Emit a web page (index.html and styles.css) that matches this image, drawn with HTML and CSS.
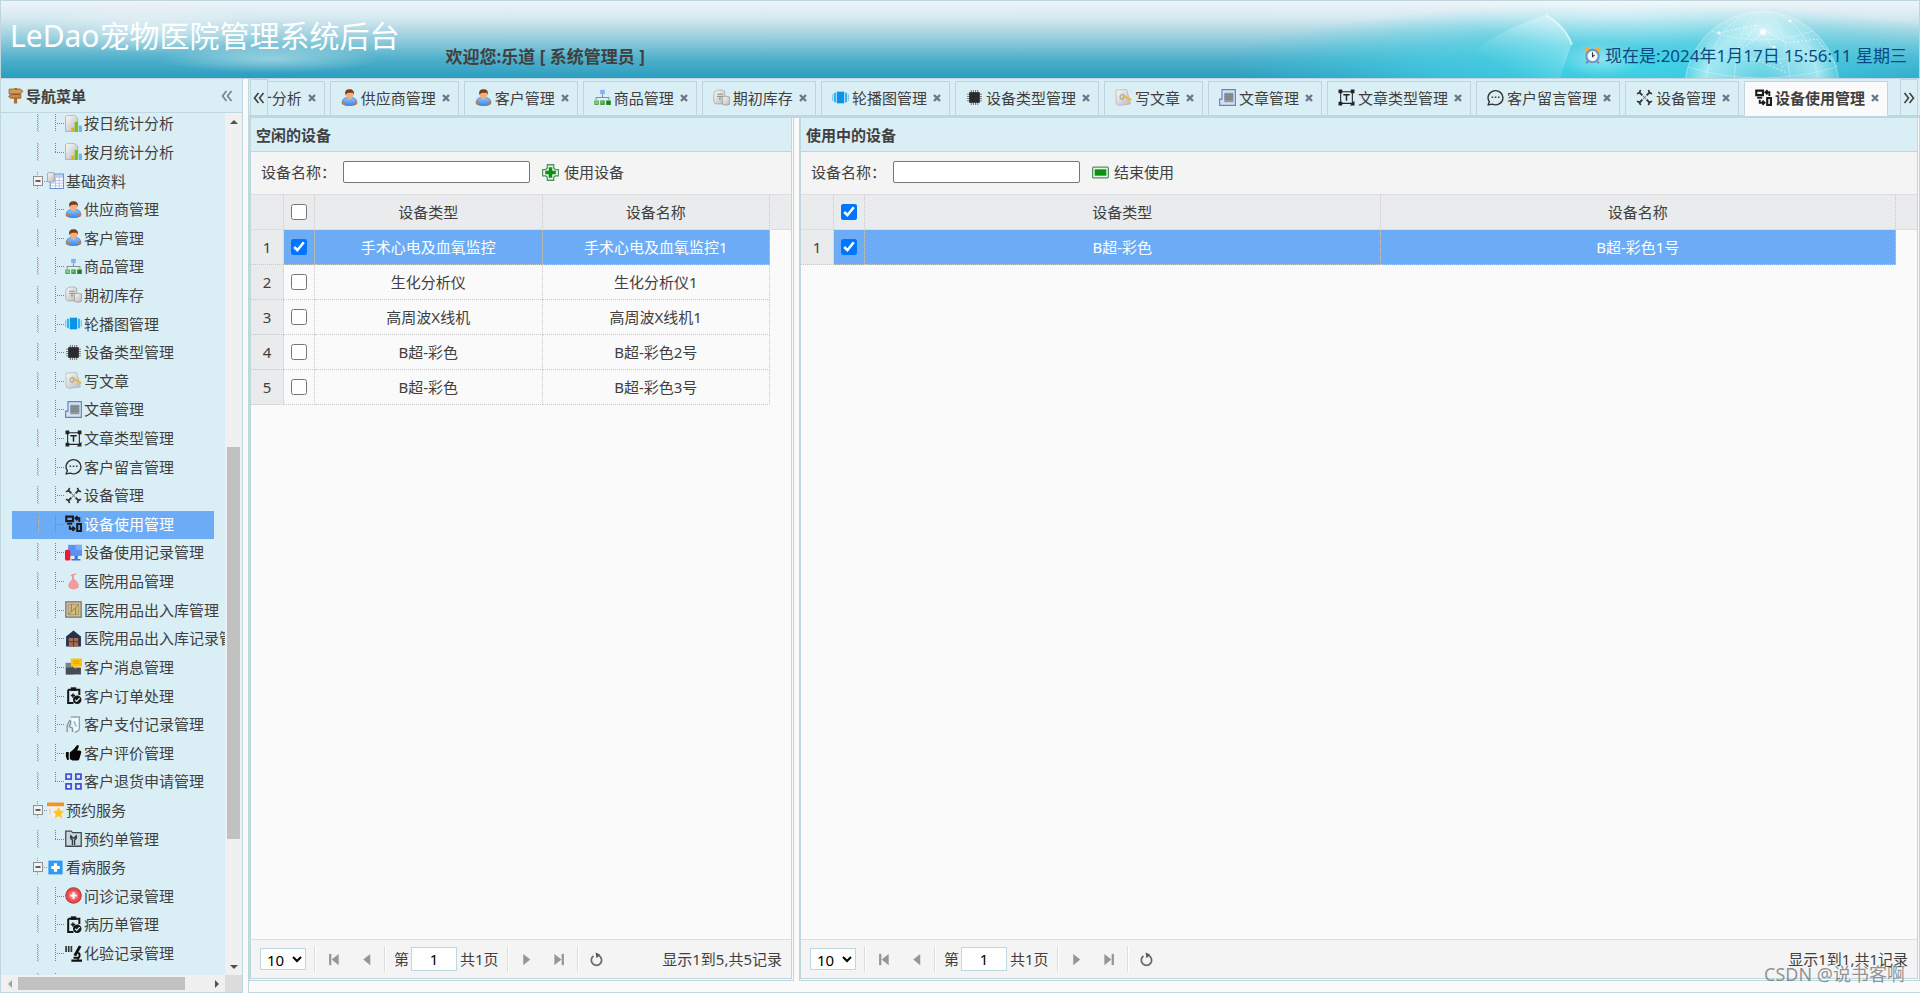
FILE: index.html
```html
<!DOCTYPE html>
<html lang="zh-CN">
<head>
<meta charset="utf-8">
<title>LeDao宠物医院管理系统后台</title>
<link rel="stylesheet" href="styles.css">
</head>
<body>
<svg class="defs" aria-hidden="true">
  <defs>
    <linearGradient id="g-blue" x1="0" y1="0" x2="0" y2="1"><stop offset="0" stop-color="#8cc4ff"/><stop offset="1" stop-color="#3c86e8"/></linearGradient>
    <linearGradient id="g-paper" x1="0" y1="0" x2="1" y2="1"><stop offset="0" stop-color="#fafafa"/><stop offset="1" stop-color="#b9b9b9"/></linearGradient>
    <radialGradient id="g-globe"><stop offset="0" stop-color="#fff" stop-opacity=".1"/><stop offset=".75" stop-color="#e4fcfe" stop-opacity=".6"/><stop offset="1" stop-color="#eaffff" stop-opacity=".15"/></radialGradient>
    <radialGradient id="g-haze"><stop offset="0" stop-color="#3ed6e8" stop-opacity=".95"/><stop offset=".5" stop-color="#45d4e8" stop-opacity=".6"/><stop offset="1" stop-color="#2fd0e4" stop-opacity="0"/></radialGradient>
    <radialGradient id="g-mist"><stop offset="0" stop-color="#fff" stop-opacity=".4"/><stop offset="1" stop-color="#fff" stop-opacity="0"/></radialGradient>
    <linearGradient id="g-box" x1="1" y1="0" x2="0" y2="1"><stop offset="0" stop-color="#e6fbfe" stop-opacity=".6"/><stop offset=".7" stop-color="#c8f6fb" stop-opacity="0"/></linearGradient>
  </defs>
  <symbol id="t-line" viewBox="0 0 17 18"><path d="M7.5 0v18" stroke="#8d9599" stroke-dasharray="1 1"/><path d="M8.500 1v17" stroke="#b4bdc1" stroke-dasharray="1 1"/></symbol>
  <symbol id="t-join" viewBox="0 0 18 18"><path d="M8.500 0v18M10 9.500h8" stroke="#7b8387" stroke-dasharray="1 1"/></symbol>
  <symbol id="t-last" viewBox="0 0 18 18"><path d="M8.500 0v9M8 9.500h10" stroke="#7b8387" stroke-dasharray="1 1"/></symbol>
  <symbol id="t-minus" viewBox="0 0 17 18"><path d="M7.500 0v18M14 9.500h3" stroke="#8d9599" stroke-dasharray="1 1"/><rect x="3.500" y="4.500" width="9" height="9" fill="#f2f2f2" stroke="#909090"/><path d="M5.500 9h5" stroke="#222" stroke-width="1.400"/></symbol>
  <symbol id="i-sign" viewBox="0 0 16 16"><path d="M7 1h2.500v14.500H6.500z" fill="#a87038"/><path d="M2 2h10.500l2.500 2-2.500 2.500H2z" fill="#d59a55" stroke="#8a5626" stroke-width=".8"/><path d="M3.500 7h9.500v3.500H3.500L1.500 9z" fill="#c98946" stroke="#8a5626" stroke-width=".8"/></symbol>
  <symbol id="i-clock" viewBox="0 0 16 16"><circle cx="3.500" cy="3.200" r="2.800" fill="#f5ae2d"/><circle cx="12.500" cy="3.200" r="2.800" fill="#f5ae2d"/><path d="M4 13l-2 2.500M12 13l2 2.500" stroke="#7893b5" stroke-width="2"/><circle cx="8" cy="8.500" r="5.800" fill="#f6f9fc" stroke="#7095c4" stroke-width="2"/><path d="M8 5v4l2-1.500" fill="none" stroke="#333"/></symbol>
  <symbol id="i-report" viewBox="0 0 16 16"><path d="M.5 1.500l2-1.200H9L12 3v12.500H.5z" fill="url(#g-paper)" stroke="#a5a5a5" stroke-width=".7"/><path d="M6 12h2.700v4H6z" fill="#f7a51c"/><path d="M9.200 6.500H12V16H9.200z" fill="#6fc21c"/><path d="M13 10h3v6h-3z" fill="#6db6f2"/></symbol>
  <symbol id="i-base" viewBox="0 0 16 16"><path d="M3 2h12.500v13.500H3z" fill="#fff" stroke="#6b8fd6"/><path d="M3.500 2.500h11.500v3H3.500z" fill="#b9d0f5"/><path d="M4 8h11M4 10.500h11M4 13h11M8 5v10M11.500 5v10" stroke="#a9c0ea" stroke-width=".8"/><path d="M.5 1q3-1.200 6.500 0v8q-3.500 1.200-6.500 0z" fill="url(#g-paper)" stroke="#999" stroke-width=".7"/></symbol>
  <symbol id="i-user" viewBox="0 0 16 16"><path d="M1 13q.3-4.500 4.500-5h5q4.200.5 4.500 5-1 2.700-7 2.700T1 13z" fill="url(#g-blue)" stroke="#2f6fc9" stroke-width=".6"/><circle cx="2.400" cy="13.300" r="1.500" fill="#c87a3c"/><circle cx="13.600" cy="13.300" r="1.500" fill="#c87a3c"/><ellipse cx="8" cy="4.800" rx="3.800" ry="4.300" fill="#efb07e"/><path d="M4 5.500Q3 .3 8 .3t4 5.200l-1-2H6.500z" fill="#7c3d14"/><path d="M6.500 9L8 10.500 9.500 9z" fill="#efb07e"/></symbol>
  <symbol id="i-org" viewBox="0 0 16 16"><path d="M8 5v3M2 10V8h12v2" fill="none" stroke="#8a8f99"/><path d="M5.800.8h4.400v4H5.800z" fill="#82b4f4"/><path d="M.3 10.800h4.200v4.200H.3z" fill="#48a83f"/><path d="M1.200 11.600h2.400v2.400H1.200z" fill="#90d488"/><path d="M5.900 10.800h4.200v4.200H5.900z" fill="#379a31"/><path d="M6.700 11.600h2v2h-2z" fill="#7ac872"/><path d="M11.500 10.800h4.300v4.200h-4.300z" fill="#16841a"/></symbol>
  <symbol id="i-store" viewBox="0 0 16 16"><path d="M1 3q5-4 10-1v12H2Q0 12 .5 8z" fill="url(#g-paper)" stroke="#a7a7a7" stroke-width=".7"/><path d="M4 5h5M4 7h5" stroke="#8f8f8f"/><circle cx="6.500" cy="9" r=".8" fill="#46a83c"/><path d="M9 7.500q3-1.500 6.500 0v7q-3 1.500-6.500 0z" fill="url(#g-paper)" stroke="#999" stroke-width=".7"/></symbol>
  <symbol id="i-slide" viewBox="0 0 16 16"><path d="M4.500 2.500h7v11h-7z" fill="#0b93e6"/><path d="M1.800 3.500h2v9h-2zM12.200 3.500h2v9h-2z" fill="#37b2f5"/><path d="M0 5h1.200v6H0zM14.800 5H16v6h-1.200z" fill="#7acdf9"/></symbol>
  <symbol id="i-chip" viewBox="0 0 16 16"><path d="M1 5h14M1 7h14M1 9h14M1 11h14M5 1v14M7 1v14M9 1v14M11 1v14" stroke="#7d7d7d"/><path d="M3 3h10v10H3z" fill="#2a2b2d"/></symbol>
  <symbol id="i-write" viewBox="0 0 16 16"><path d="M1 1l10-.5L14.500 14 4 15.500 1 14z" fill="url(#g-paper)" stroke="#b5b5b5" stroke-width=".7"/><path d="M5 6q2-2 4 0l-2 4q-3-1-2-4" fill="none" stroke="#8b8b8b" stroke-width=".8"/><path d="M7 6l8.500 4.500" stroke="#edb640" stroke-width="1.800"/></symbol>
  <symbol id="i-article" viewBox="0 0 16 16"><path d="M2.800.6h12.600v14.800H.6V9.500h2.200z" fill="#d5e2f2" stroke="#6681c8" stroke-width="1.100"/><path d="M5 3.500h8.500v9H5z" fill="#8f979f"/><path d="M5 5.500h8.500M5 7.500h8.500M5 9.500h8.500" stroke="#6e767d" stroke-width=".8"/></symbol>
  <symbol id="i-type" viewBox="0 0 16 16"><path d="M2.500 2.500h11v11h-11z" fill="none" stroke="#222"/><path d="M.5.5H4V4H.5zM12 .5h3.500V4H12zM.5 12H4v3.500H.5zM15.500 11v4.500H11z" fill="#222"/><path d="M5 5.500h6M8 5.500V11" stroke="#222" stroke-width="1.400"/></symbol>
  <symbol id="i-msg" viewBox="0 0 16 16"><path d="M2.200 12A7 6.700 0 1 1 5 14.300L1 15z" fill="none" stroke="#333" stroke-width="1.300" stroke-linejoin="round"/><path d="M4.300 7.800h1.500M7.300 7.800h1.500M10.300 7.800h1.500" stroke="#444" stroke-width="1.400"/></symbol>
  <symbol id="i-tools" viewBox="0 0 16 16"><path d="M3 3l3 3M13 3l-3 3M3 13l3-3M13 13l-3-3" stroke="#333" stroke-width="1.800"/><path d="M.8 4.200q2.500.5 3.500-3.400M15.200 4.200q-2.500.5-3.500-3.400M.8 11.800q2.500-.5 3.500 3.400M15.200 11.800q-2.500-.5-3.500 3.400" fill="none" stroke="#333" stroke-width="1.500"/><path d="M6.500 6.500l3 3M9.500 6.500l-3 3" stroke="#8b8b8b"/></symbol>
  <symbol id="i-use" viewBox="0 0 16 16"><path d="M1.200 1.500h6.300v4.300h-6.300z" fill="none" stroke="#1b1b1b" stroke-width="2"/><path d="M2 8.200h4.800" stroke="#1b1b1b" stroke-width="1.800"/><path d="M11.500 8.500h3.500v6.500h-3.500z" fill="none" stroke="#1b1b1b" stroke-width="2"/><path d="M10 3h3.500v3.500M11.800 1L9.800 3l2 2M4.500 10v3h4M7 11l2 2-2 2" fill="none" stroke="#1b1b1b" stroke-width="1.800"/></symbol>
  <symbol id="i-pc" viewBox="0 0 16 16"><path d="M3 .8h13v10.400H3z" fill="#5b90f4"/><path d="M10 .8h6v5h-6z" fill="#7fabf8"/><path d="M9 11h3v3h2.500v1.500H6V14h3z" fill="#3d6fe0"/><rect x="0" y="5.500" width="5" height="10" rx="1.500" fill="#f01830"/></symbol>
  <symbol id="i-drop" viewBox="0 0 16 16"><path d="M7.500 1v6" stroke="#f08a8a" stroke-width="1.600"/><path d="M5.500 2.500L10.500.8" stroke="#ec9a9a" stroke-width="1.300"/><path d="M8 5q5 4 5 7t-5 3.500q-5-.5-5-3.500t5-7z" fill="#f19c9c"/></symbol>
  <symbol id="i-crate" viewBox="0 0 16 16"><path d="M.8.800h14.400v14.400H.8z" fill="#dfcb94" stroke="#6f7378" stroke-width="1.200"/><path d="M3 3h10v10H3z" fill="#d4bc7e" stroke="#9b8a60" stroke-width=".8"/><path d="M3 13L13 3M6 3v7M10 6v7" stroke="#8d7c56" stroke-width=".9"/></symbol>
  <symbol id="i-house" viewBox="0 0 16 16"><path d="M1 6l7-5.500L15 6v9.500H1z" fill="#28304f"/><path d="M3.500 7.500h9v8h-9z" fill="#a76a4c"/><path d="M3.500 11h9M8 7.500v8" stroke="#5c3a34"/></symbol>
  <symbol id="i-news" viewBox="0 0 16 16"><path d="M.5 4.500H8v11H.5z" fill="#7a828a"/><path d="M1 9h14v6.500H1z" fill="#454c54"/><path d="M5.500.5H16v7.500h-4.500l-2 2.500V8h-4z" fill="#fdc30a"/><path d="M8 3h5.500M8 5h5.500" stroke="#e79800"/></symbol>
  <symbol id="i-order" viewBox="0 0 16 16"><path d="M3 2.500h10.500v5M8 15H3V2.500" fill="none" stroke="#151515" stroke-width="1.900"/><path d="M5.500.3h5v3.400h-5z" fill="#151515"/><path d="M5.500 8h4M7.500 6v4" stroke="#151515" stroke-width="1.400"/><circle cx="11.500" cy="12" r="4" fill="#151515"/><path d="M9.500 12l1.500 1.500 2.800-3" fill="none" stroke="#daecf4" stroke-width="1.200"/></symbol>
  <symbol id="i-pay" viewBox="0 0 16 16"><path d="M5.500 1h8v11.500q-1 2.500-4.500 2.500" fill="#f5fafc" stroke="#9aa1a8" stroke-width="1.300"/><path d="M4.500 4L2 9v6M4.500 4q2 1-.5 6l3 1.500V15" fill="none" stroke="#878e96" stroke-width="1.200"/><path d="M8.500 5l2 5" stroke="#6cc4ee" stroke-width="1.500"/></symbol>
  <symbol id="i-like" viewBox="0 0 16 16"><path d="M1 7.500h2.500v7.500H2Q0 11 1 7.500zM4.500 8Q9 5 11 1.500q2-1.500 2 1L11.500 6H14q2 .5 1 3l-1.500 5q-.5 1.500-2 1.500H7L4.500 14z" fill="#050505"/></symbol>
  <symbol id="i-grid" viewBox="0 0 16 16"><path d="M1 1h4.800v4.800H1zM10.200 1H15v4.800h-4.800zM1 10.200h4.800V15H1zM10.200 10.200H15V15h-4.800z" fill="none" stroke="#4b4fd8" stroke-width="1.700"/></symbol>
  <symbol id="i-cal" viewBox="0 0 16 16"><path d="M.5 3h14v11.500H.5z" fill="#f2efe8"/><path d="M2 6h1.500v6H2z" fill="#c9d8f5"/><path d="M0 .5h16v3.500H0z" fill="#f5902a"/><path d="M11 5l1.700 3.300 3.300.5-2.500 2.500.7 3.700-3.200-1.700L7.500 15l.7-3.700L5.500 8.800l3.500-.5z" fill="#fdc628"/></symbol>
  <symbol id="i-folder" viewBox="0 0 16 16"><path d="M.7 1h5l1.500 1.500h8.100v12.800H.7z" fill="#c7d9df" stroke="#3e4a4e" stroke-width="1.200"/><path d="M7 14V9.500Q4.500 8 5.500 5.500L7.300 7.500h1.400L10.500 5.500Q11.500 8 9 9.500V14" fill="none" stroke="#333c40" stroke-width="1.300"/></symbol>
  <symbol id="i-cross" viewBox="0 0 16 16"><path d="M1.300 1.500h13.400v13H1.300z" fill="#2e9bf0"/><path d="M8 4v8M4 8h8" stroke="#fff" stroke-width="3"/></symbol>
  <symbol id="i-med" viewBox="0 0 16 16"><circle cx="8" cy="8" r="7.300" fill="#f2474b" stroke="#b53a40"/><circle cx="8" cy="8" r="4.300" fill="#f7777a"/><path d="M8 5v6M5 8h6" stroke="#fff" stroke-width="2"/></symbol>
  <symbol id="i-scope" viewBox="0 0 16 16"><path d="M1 1v5.500M3.500 1v5.500M6 1v5.500" stroke="#333" stroke-width="1.600"/><path d="M13 .5l2.500 1-5 9L8 9.500z" fill="#111"/><path d="M12.500 7q3 3-1 6.500M6 14.700h10M8 12h4" fill="none" stroke="#111" stroke-width="1.900"/></symbol>
  <symbol id="i-add" viewBox="0 0 16 16"><path d="M5 .7h6v3l1.500 1.500h3v6h-3L11 12.500v2.800H5v-2.800l-1.500-1.300h-3v-6h3L5 3.700z" fill="#edf6ed" stroke="#4f9460" stroke-width="1.200"/><path d="M6.300 3h3.400v3.300H13v3.400H9.700V13H6.300V9.700H3V6.300h3.300z" fill="#0c930c"/></symbol>
  <symbol id="i-remove" viewBox="0 0 16 16"><rect x=".6" y="3" width="14.800" height="10" rx="1" fill="#edf6ed" stroke="#4f9460" stroke-width="1.200"/><path d="M2.500 5h11v6h-11z" fill="#0c930c"/></symbol>
  <symbol id="i-close" viewBox="0 0 8 8"><path d="M1 1l6 6M7 1L1 7" stroke="#6c7889" stroke-width="2.400"/></symbol>
  <symbol id="i-left" viewBox="0 0 12 12"><path d="M5.500 1L1.500 6l4 5M10.500 1l-4 5 4 5" fill="none" stroke="currentColor" stroke-width="1.600"/></symbol>
  <symbol id="i-right" viewBox="0 0 12 12"><path d="M1.500 1l4 5-4 5M6.500 1l4 5-4 5" fill="none" stroke="currentColor" stroke-width="1.600"/></symbol>
  <symbol id="p-first" viewBox="0 0 16 16"><path d="M4.500 2v12" stroke="#969696" stroke-width="2.400"/><path d="M13.500 2v12L6 8z" fill="#969696"/></symbol>
  <symbol id="p-prev" viewBox="0 0 16 16"><path d="M12 2v12L4.500 8z" fill="#969696"/></symbol>
  <symbol id="p-next" viewBox="0 0 16 16"><path d="M4.500 2v12L12 8z" fill="#969696"/></symbol>
  <symbol id="p-last" viewBox="0 0 16 16"><path d="M11.500 2v12" stroke="#969696" stroke-width="2.400"/><path d="M2.500 2v12L10 8z" fill="#969696"/></symbol>
  <symbol id="p-load" viewBox="0 0 16 16"><path d="M4.800 4.200a5.500 5.500 0 1 0 6-.2" fill="none" stroke="#746b66" stroke-width="1.900"/><path d="M7 .5l5 2.500L8 6.700z" fill="#5b504a"/></symbol>
</svg>

<div class="app">
  <header class="banner">
    <svg class="banner-art" viewBox="0 0 720 77" aria-hidden="true">
      <ellipse cx="430" cy="66" rx="400" ry="64" fill="url(#g-haze)"/>
      <ellipse cx="420" cy="10" rx="160" ry="36" fill="url(#g-mist)"/>
      <path d="M260 60q40-32 87-46 20 12 26 28l-12 35H250z" fill="url(#g-box)"/>
      <path d="M347 14q20 12 26 30" fill="none" stroke="#fff" stroke-width="2" opacity=".55"/>
      <ellipse cx="402" cy="58" rx="44" ry="18" fill="url(#g-mist)"/>
      <circle cx="563" cy="88" r="78" fill="url(#g-globe)"/>
      <g fill="none" stroke="#f4ffff" stroke-width="1" opacity=".32">
        <circle cx="563" cy="88" r="77"/><ellipse cx="563" cy="88" rx="56" ry="78"/><ellipse cx="563" cy="88" rx="28" ry="78"/>
        <path d="M512 30q50 18 102 0M496 48q66 22 134 0M488 66q74 22 150 0"/>
      </g>
      <path d="M520 32l38-8 30 18 30-4 20 28M540 50l24-18 20 34M558 24l-20 26 50 22" fill="none" stroke="#fff" stroke-width=".8" stroke-dasharray="2 2" opacity=".8"/>
      <ellipse cx="564" cy="31" rx="24" ry="16" fill="url(#g-mist)"/>
      <g fill="#fff" opacity=".9"><circle cx="564" cy="31" r="3"/><circle cx="520" cy="32" r="1.500"/><circle cx="591" cy="20" r="1.500"/><circle cx="600" cy="50" r="1.500"/><circle cx="540" cy="50" r="1.500"/><circle cx="575" cy="46" r="1.500"/></g>
    </svg>
    <svg class="banner-mist" viewBox="0 0 400 77" preserveAspectRatio="none" aria-hidden="true">
      <ellipse cx="150" cy="28" rx="120" ry="24" fill="url(#g-mist)"/><ellipse cx="270" cy="58" rx="110" ry="14" fill="url(#g-mist)"/>
    </svg>
    <h1 class="brand">LeDao宠物医院管理系统后台</h1>
    <p class="welcome">欢迎您:乐道 [ 系统管理员 ]</p>
    <p class="now"><svg class="ico"><use href="#i-clock"/></svg><time>现在是:2024年1月17日 15:56:11 星期三</time></p>
  </header>

  <aside class="nav">
    <div class="nav-head"><svg class="ico"><use href="#i-sign"/></svg><h2>导航菜单</h2><button class="fold" aria-label="折叠"><svg><use href="#i-left"/></svg></button></div>
    <div class="nav-body">
      <div class="tree-view">
      <ul class="tree">
        <li class="kid"><a href="#"><svg class="ln"><use href="#t-line"/></svg><svg class="jn"><use href="#t-join"/></svg><svg class="ico"><use href="#i-report"/></svg>按日统计分析</a></li>
        <li class="kid"><a href="#"><svg class="ln"><use href="#t-line"/></svg><svg class="jn"><use href="#t-last"/></svg><svg class="ico"><use href="#i-report"/></svg>按月统计分析</a></li>
        <li><a href="#"><svg class="ln"><use href="#t-minus"/></svg><svg class="ico"><use href="#i-base"/></svg>基础资料</a></li>
        <li class="kid"><a href="#"><svg class="ln"><use href="#t-line"/></svg><svg class="jn"><use href="#t-join"/></svg><svg class="ico"><use href="#i-user"/></svg>供应商管理</a></li>
        <li class="kid"><a href="#"><svg class="ln"><use href="#t-line"/></svg><svg class="jn"><use href="#t-join"/></svg><svg class="ico"><use href="#i-user"/></svg>客户管理</a></li>
        <li class="kid"><a href="#"><svg class="ln"><use href="#t-line"/></svg><svg class="jn"><use href="#t-join"/></svg><svg class="ico"><use href="#i-org"/></svg>商品管理</a></li>
        <li class="kid"><a href="#"><svg class="ln"><use href="#t-line"/></svg><svg class="jn"><use href="#t-join"/></svg><svg class="ico"><use href="#i-store"/></svg>期初库存</a></li>
        <li class="kid"><a href="#"><svg class="ln"><use href="#t-line"/></svg><svg class="jn"><use href="#t-join"/></svg><svg class="ico"><use href="#i-slide"/></svg>轮播图管理</a></li>
        <li class="kid"><a href="#"><svg class="ln"><use href="#t-line"/></svg><svg class="jn"><use href="#t-join"/></svg><svg class="ico"><use href="#i-chip"/></svg>设备类型管理</a></li>
        <li class="kid"><a href="#"><svg class="ln"><use href="#t-line"/></svg><svg class="jn"><use href="#t-join"/></svg><svg class="ico"><use href="#i-write"/></svg>写文章</a></li>
        <li class="kid"><a href="#"><svg class="ln"><use href="#t-line"/></svg><svg class="jn"><use href="#t-join"/></svg><svg class="ico"><use href="#i-article"/></svg>文章管理</a></li>
        <li class="kid"><a href="#"><svg class="ln"><use href="#t-line"/></svg><svg class="jn"><use href="#t-join"/></svg><svg class="ico"><use href="#i-type"/></svg>文章类型管理</a></li>
        <li class="kid"><a href="#"><svg class="ln"><use href="#t-line"/></svg><svg class="jn"><use href="#t-join"/></svg><svg class="ico"><use href="#i-msg"/></svg>客户留言管理</a></li>
        <li class="kid"><a href="#"><svg class="ln"><use href="#t-line"/></svg><svg class="jn"><use href="#t-join"/></svg><svg class="ico"><use href="#i-tools"/></svg>设备管理</a></li>
        <li class="kid"><a class="on" href="#"><svg class="ln"><use href="#t-line"/></svg><svg class="jn"><use href="#t-join"/></svg><svg class="ico"><use href="#i-use"/></svg>设备使用管理</a></li>
        <li class="kid"><a href="#"><svg class="ln"><use href="#t-line"/></svg><svg class="jn"><use href="#t-join"/></svg><svg class="ico"><use href="#i-pc"/></svg>设备使用记录管理</a></li>
        <li class="kid"><a href="#"><svg class="ln"><use href="#t-line"/></svg><svg class="jn"><use href="#t-join"/></svg><svg class="ico"><use href="#i-drop"/></svg>医院用品管理</a></li>
        <li class="kid"><a href="#"><svg class="ln"><use href="#t-line"/></svg><svg class="jn"><use href="#t-join"/></svg><svg class="ico"><use href="#i-crate"/></svg>医院用品出入库管理</a></li>
        <li class="kid"><a href="#"><svg class="ln"><use href="#t-line"/></svg><svg class="jn"><use href="#t-join"/></svg><svg class="ico"><use href="#i-house"/></svg>医院用品出入库记录管理</a></li>
        <li class="kid"><a href="#"><svg class="ln"><use href="#t-line"/></svg><svg class="jn"><use href="#t-join"/></svg><svg class="ico"><use href="#i-news"/></svg>客户消息管理</a></li>
        <li class="kid"><a href="#"><svg class="ln"><use href="#t-line"/></svg><svg class="jn"><use href="#t-join"/></svg><svg class="ico"><use href="#i-order"/></svg>客户订单处理</a></li>
        <li class="kid"><a href="#"><svg class="ln"><use href="#t-line"/></svg><svg class="jn"><use href="#t-join"/></svg><svg class="ico"><use href="#i-pay"/></svg>客户支付记录管理</a></li>
        <li class="kid"><a href="#"><svg class="ln"><use href="#t-line"/></svg><svg class="jn"><use href="#t-join"/></svg><svg class="ico"><use href="#i-like"/></svg>客户评价管理</a></li>
        <li class="kid"><a href="#"><svg class="ln"><use href="#t-line"/></svg><svg class="jn"><use href="#t-last"/></svg><svg class="ico"><use href="#i-grid"/></svg>客户退货申请管理</a></li>
        <li><a href="#"><svg class="ln"><use href="#t-minus"/></svg><svg class="ico"><use href="#i-cal"/></svg>预约服务</a></li>
        <li class="kid"><a href="#"><svg class="ln"><use href="#t-line"/></svg><svg class="jn"><use href="#t-last"/></svg><svg class="ico"><use href="#i-folder"/></svg>预约单管理</a></li>
        <li><a href="#"><svg class="ln"><use href="#t-minus"/></svg><svg class="ico"><use href="#i-cross"/></svg>看病服务</a></li>
        <li class="kid"><a href="#"><svg class="ln"><use href="#t-line"/></svg><svg class="jn"><use href="#t-join"/></svg><svg class="ico"><use href="#i-med"/></svg>问诊记录管理</a></li>
        <li class="kid"><a href="#"><svg class="ln"><use href="#t-line"/></svg><svg class="jn"><use href="#t-join"/></svg><svg class="ico"><use href="#i-order"/></svg>病历单管理</a></li>
        <li class="kid"><a href="#"><svg class="ln"><use href="#t-line"/></svg><svg class="jn"><use href="#t-join"/></svg><svg class="ico"><use href="#i-scope"/></svg>化验记录管理</a></li>
        <li class="kid"><a href="#"><svg class="ln"><use href="#t-line"/></svg><svg class="jn"><use href="#t-join"/></svg></a></li>
      </ul>
      </div>
      <div class="bar bar-v"><i class="arrow up"></i><span class="rail"><span class="thumb"></span></span><i class="arrow down"></i></div>
      <div class="bar bar-h"><i class="arrow prev"></i><span class="rail"><span class="thumb"></span></span><i class="arrow next"></i></div>
      <div class="corner"></div>
    </div>
  </aside>

  <main class="center">
    <div class="tabbar">
      <button class="scroller" aria-label="向左"><svg><use href="#i-left"/></svg></button>
      <div class="tabs">
        <button class="tab"><svg class="ico"><use href="#i-report"/></svg><span>按月统计分析</span><svg class="x"><use href="#i-close"/></svg></button>
        <button class="tab"><svg class="ico"><use href="#i-user"/></svg><span>供应商管理</span><svg class="x"><use href="#i-close"/></svg></button>
        <button class="tab"><svg class="ico"><use href="#i-user"/></svg><span>客户管理</span><svg class="x"><use href="#i-close"/></svg></button>
        <button class="tab"><svg class="ico"><use href="#i-org"/></svg><span>商品管理</span><svg class="x"><use href="#i-close"/></svg></button>
        <button class="tab"><svg class="ico"><use href="#i-store"/></svg><span>期初库存</span><svg class="x"><use href="#i-close"/></svg></button>
        <button class="tab"><svg class="ico"><use href="#i-slide"/></svg><span>轮播图管理</span><svg class="x"><use href="#i-close"/></svg></button>
        <button class="tab"><svg class="ico"><use href="#i-chip"/></svg><span>设备类型管理</span><svg class="x"><use href="#i-close"/></svg></button>
        <button class="tab"><svg class="ico"><use href="#i-write"/></svg><span>写文章</span><svg class="x"><use href="#i-close"/></svg></button>
        <button class="tab"><svg class="ico"><use href="#i-article"/></svg><span>文章管理</span><svg class="x"><use href="#i-close"/></svg></button>
        <button class="tab"><svg class="ico"><use href="#i-type"/></svg><span>文章类型管理</span><svg class="x"><use href="#i-close"/></svg></button>
        <button class="tab"><svg class="ico"><use href="#i-msg"/></svg><span>客户留言管理</span><svg class="x"><use href="#i-close"/></svg></button>
        <button class="tab"><svg class="ico"><use href="#i-tools"/></svg><span>设备管理</span><svg class="x"><use href="#i-close"/></svg></button>
        <button class="tab active"><svg class="ico"><use href="#i-use"/></svg><span>设备使用管理</span><svg class="x"><use href="#i-close"/></svg></button>
      </div>
      <button class="scroller" aria-label="向右"><svg><use href="#i-right"/></svg></button>
    </div>

    <div class="regions">
      <section class="region">
        <div class="panel">
          <h2 class="title">空闲的设备</h2>
          <div class="tools"><label for="q1">设备名称：</label><input class="query" id="q1" type="text"><button class="act"><svg class="ico"><use href="#i-add"/></svg>使用设备</button></div>
          <div class="grid">
            <table>
              <colgroup><col class="c-no"><col class="c-ck"><col><col><col class="c-end"></colgroup>
              <thead><tr><th></th><th><input type="checkbox" aria-label="全选"></th><th>设备类型</th><th>设备名称</th><th></th></tr></thead>
              <tbody>
                <tr class="sel"><td>1</td><td><input type="checkbox" aria-label="选择1" checked></td><td>手术心电及血氧监控</td><td>手术心电及血氧监控1</td><td></td></tr>
                <tr><td>2</td><td><input type="checkbox" aria-label="选择2"></td><td>生化分析仪</td><td>生化分析仪1</td><td></td></tr>
                <tr><td>3</td><td><input type="checkbox" aria-label="选择3"></td><td>高周波X线机</td><td>高周波X线机1</td><td></td></tr>
                <tr><td>4</td><td><input type="checkbox" aria-label="选择4"></td><td>B超-彩色</td><td>B超-彩色2号</td><td></td></tr>
                <tr><td>5</td><td><input type="checkbox" aria-label="选择5"></td><td>B超-彩色</td><td>B超-彩色3号</td><td></td></tr>
              </tbody>
            </table>
          </div>
          <div class="pager">
            <select aria-label="每页条数"><option>10</option></select><i class="sep"></i>
            <button aria-label="首页"><svg><use href="#p-first"/></svg></button><button aria-label="上一页"><svg><use href="#p-prev"/></svg></button><i class="sep"></i>
            <label class="pg" for="p1">第</label><input class="num" id="p1" type="text" value="1"><span class="total">共1页</span><i class="sep"></i>
            <button aria-label="下一页"><svg><use href="#p-next"/></svg></button><button aria-label="末页"><svg><use href="#p-last"/></svg></button><i class="sep"></i>
            <button aria-label="刷新"><svg><use href="#p-load"/></svg></button><span class="info">显示1到5,共5记录</span>
          </div>
        </div>
      </section>
      <section class="region">
        <div class="panel">
          <h2 class="title">使用中的设备</h2>
          <div class="tools"><label for="q2">设备名称：</label><input class="query" id="q2" type="text"><button class="act"><svg class="ico"><use href="#i-remove"/></svg>结束使用</button></div>
          <div class="grid">
            <table>
              <colgroup><col class="c-no"><col class="c-ck"><col><col><col class="c-end"></colgroup>
              <thead><tr><th></th><th><input type="checkbox" aria-label="全选" checked></th><th>设备类型</th><th>设备名称</th><th></th></tr></thead>
              <tbody>
                <tr class="sel"><td>1</td><td><input type="checkbox" aria-label="选择1" checked></td><td>B超-彩色</td><td>B超-彩色1号</td><td></td></tr>
              </tbody>
            </table>
          </div>
          <div class="pager">
            <select aria-label="每页条数"><option>10</option></select><i class="sep"></i>
            <button aria-label="首页"><svg><use href="#p-first"/></svg></button><button aria-label="上一页"><svg><use href="#p-prev"/></svg></button><i class="sep"></i>
            <label class="pg" for="p2">第</label><input class="num" id="p2" type="text" value="1"><span class="total">共1页</span><i class="sep"></i>
            <button aria-label="下一页"><svg><use href="#p-next"/></svg></button><button aria-label="末页"><svg><use href="#p-last"/></svg></button><i class="sep"></i>
            <button aria-label="刷新"><svg><use href="#p-load"/></svg></button><span class="info">显示1到1,共1记录</span>
          </div>
        </div>
      </section>
    </div>
  </main>
  <div class="credit">CSDN @说书客啊</div>
</div>
</body>
</html>
```
FILE: styles.css
```css
* { box-sizing: border-box; }
html, body { height: 100%; margin: 0; }
body {
  font-family: "Noto Sans", "Noto Sans CJK SC", sans-serif;
  font-size: 15px;
  line-height: 20px;
  color: #404040;
  background: #fafafa;
}
h1, h2, p { margin: 0; font-size: inherit; }
button {
  font: inherit;
  color: inherit;
  background: none;
  border: 0;
  padding: 0;
  cursor: pointer;
}
svg { display: block; flex: none; }
.defs { position: absolute; width: 0; height: 0; }
.ico { width: 17px; height: 17px; }

.app {
  position: relative;
  display: grid;
  grid-template: 79px minmax(0, 1fr) / 243px minmax(0, 1fr);
  column-gap: 5px;
  height: 100vh;
}

/* banner */
.banner {
  grid-column: 1 / -1;
  position: relative;
  display: flex;
  align-items: center;
  padding: 0 12px 0 9px;
  border: 1px solid #bfd6de;
  background: linear-gradient(#edf4f9 0%, #d6e9f0 22%, #93ccdc 50%, #4fb0cb 75%, #2c9dbf 100%);
  overflow: hidden;
}
.banner-art { position: absolute; right: 0; top: 0; width: 720px; height: 77px; }
.banner-mist { position: absolute; left: 0; top: 0; width: 400px; height: 77px; }
.brand {
  position: relative;
  font-size: 30px;
  line-height: 40px;
  font-weight: 400;
  color: #fff;
  padding-bottom: 8px;
}
.welcome {
  position: relative;
  margin-left: 46px;
  padding-top: 34px;
  font-size: 17px;
  font-weight: 700;
}
.now {
  position: relative;
  display: flex;
  align-items: center;
  gap: 4px;
  margin-left: auto;
  padding-top: 32px;
  font-size: 17px;
  color: #0b4a80;
}

/* navigation */
.nav {
  display: flex;
  flex-direction: column;
  min-height: 0;
  border: 1px solid #bfd8e0;
  border-top: 0;
  background: #daeef5;
}
.nav-head {
  display: flex;
  align-items: center;
  height: 34px;
  padding: 0 9px 0 6px;
  gap: 2px;
  border-bottom: 1px solid #bfd8e0;
}
.fold { margin-left: auto; color: #74838c; }
.fold svg { width: 12px; height: 12px; }
.nav-body {
  flex: 1;
  min-height: 0;
  display: grid;
  grid-template: minmax(0, 1fr) 17px / minmax(0, 1fr) 17px;
}
.tree-view { overflow: hidden; }
.tree {
  display: grid;
  grid-template-columns: minmax(0, 1fr);
  grid-auto-rows: 1fr;
  height: 887px;
  margin: -3px 11px 0;
  padding: 0;
  list-style: none;
}
.tree a {
  display: flex;
  align-items: center;
  height: 100%;
  padding: 0 0 2px 18px;
  color: inherit;
  text-decoration: none;
  white-space: nowrap;
}
.tree .ico { margin-right: 2px; }
.tree .on { background: #6cacf6; color: #fff; }
.ln { width: 17px; height: 18px; }
.jn { width: 18px; height: 18px; }

.bar { display: flex; align-items: center; background: #f0f0f0; }
.bar-v { flex-direction: column; }
.rail { flex: 1; display: flex; min-height: 0; }
.bar-v .rail { flex-direction: column; width: 13px; }
.bar-v .rail::before { content: ""; flex: 317; }
.bar-v .thumb { flex: 392; background: #c1c1c1; }
.bar-v .rail::after { content: ""; flex: 119; }
.bar-h .rail { height: 13px; }
.bar-h .thumb { flex: 167; background: #c1c1c1; }
.bar-h .rail::after { content: ""; flex: 23; }
.corner { background: #dcdcdc; }
.arrow { display: grid; place-items: center; width: 17px; height: 17px; }
.arrow::before { content: ""; border: 4px solid transparent; }
.up::before { border-top: 0; border-bottom-color: #505050; }
.down::before { border-bottom: 0; border-top-color: #505050; }
.prev::before { border-left: 0; border-right-color: #a3a3a3; }
.next::before { border-right: 0; border-left-color: #505050; }

/* tabs */
.center {
  display: flex;
  flex-direction: column;
  min-width: 0;
  min-height: 0;
  border-left: 1px solid #bfd8e0;
  border-bottom: 1px solid #bfd8e0;
  padding-bottom: 11px;
}
.tabbar {
  display: flex;
  height: 39px;
  padding: 0 2px 0 1px;
  background: linear-gradient(#daeef5 36px, #bfd6de 36px);
}
.scroller {
  display: grid;
  place-items: center;
  width: 18px;
  height: 37px;
  border: 1px solid #bfd6de;
}
.scroller svg { width: 12px; height: 12px; }
.tabs {
  flex: 1;
  min-width: 0;
  display: flex;
  justify-content: flex-end;
  gap: 5px;
  padding: 2px 12px 2px 0;
  overflow: hidden;
}
.tab {
  flex: none;
  display: flex;
  align-items: center;
  padding: 0 8px 2px 10px;
  border: 1px solid #bfd6de;
  white-space: nowrap;
}
.tab .ico { margin-right: 3px; }
.x { width: 8px; height: 8px; margin-left: 6px; }
.tab.active { background: #fafafa; border-bottom-color: #fafafa; font-weight: 700; }

/* regions */
.regions {
  flex: 1;
  min-height: 0;
  display: grid;
  grid-template-columns: minmax(0, 545fr) minmax(0, 1121fr);
  gap: 5px;
}
.region {
  display: flex;
  border: 1px solid #bfd8e0;
  border-top: 0;
  padding: 0 1px 1px 0;
}
.panel {
  flex: 1;
  min-width: 0;
  display: flex;
  flex-direction: column;
  border: 1px solid #bfd8e0;
  border-top: 0;
}
.title {
  height: 34px;
  padding: 7px 5px;
  border-bottom: 1px solid #bfd8e0;
  background: #daeef5;
}
.tools {
  display: flex;
  align-items: center;
  height: 43px;
  padding: 0 10px 2px;
  border-bottom: 1px solid #ddd;
  background: #f4f4f4;
}
.query {
  width: 187px;
  height: 22px;
  margin: 0 12px 0 7px;
  border: 1px solid #767676;
  border-radius: 2px;
  background: #fff;
  font: inherit;
}
.act { display: flex; align-items: center; gap: 5px; }

.grid { flex: 1; min-height: 0; }
table {
  width: 100%;
  table-layout: fixed;
  border-collapse: separate;
  border-spacing: 0;
}
.c-no { width: 33px; }
.c-ck { width: 31px; }
.c-end { width: 21px; }
th, td {
  height: 35px;
  padding: 0 0 1px;
  font-weight: 400;
  text-align: center;
  border-right: 1px dotted #c8c8c8;
  border-bottom: 1px dotted #c8c8c8;
}
th { background: #eaebed; border-bottom: 1px solid #ddd; }
th:last-child { border-right: 0; }
td:last-child { border: 0; }
td:first-child { background: #eaebed; }
.sel td:not(:first-child):not(:last-child) { background: #6cacf6; color: #fff; }
input[type="checkbox"] {
  display: block;
  width: 16px;
  height: 16px;
  margin: 0 auto;
  accent-color: #0075ff;
}

/* pager */
.pager {
  display: flex;
  align-items: center;
  height: 39px;
  padding: 0 9px;
  border-top: 1px solid #ddd;
  background: #f4f4f4;
}
.pager select {
  width: 46px;
  height: 22px;
  padding: 0 0 2px 2px;
  border: 1px solid #bfd8e0;
  background: #fff;
  color: #000;
  font: inherit;
  line-height: 18px;
}
.sep {
  width: 2px;
  height: 26px;
  margin: 0 8px;
  border-left: 1px solid #ddd;
  border-right: 1px solid #fff;
}
.pager button { padding: 0 2px; margin-right: 14px; }
.pager button svg { width: 15px; height: 15px; }
.pager button:has(+ .sep), .pager button:has(+ .info) { margin-right: 0; }
.pager .num {
  width: 46px;
  height: 24px;
  margin: 0 3px 0 2px;
  border: 1px solid #bfd8e0;
  background: #fff;
  color: #000;
  font: inherit;
  text-align: center;
}
.info { margin-left: auto; }

.credit {
  position: absolute;
  right: 15px;
  bottom: 7px;
  font-size: 18px;
  line-height: 24px;
  color: rgba(90, 90, 90, .65);
}
```
